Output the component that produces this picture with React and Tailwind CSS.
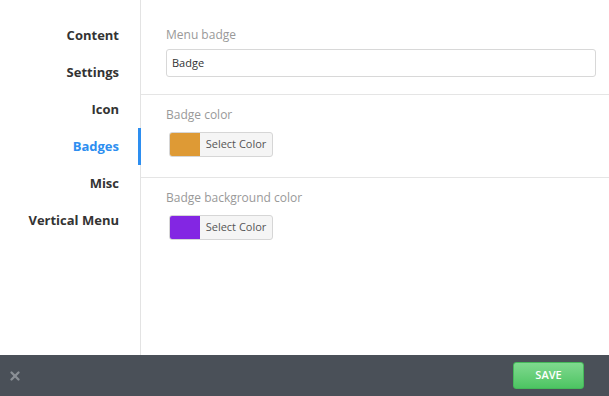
import { X } from 'lucide-react';

const navItems = ['Content', 'Settings', 'Icon', 'Badges', 'Misc', 'Vertical Menu'];

const ColorPicker = ({ color }) => (
    <div className="flex h-[25px] w-[104px] overflow-hidden rounded-[3px] border border-[#d6d6d6] bg-[#f5f5f5]">
        <div className={`h-full w-[30px] ${color}`} />
        <div className="flex flex-1 items-center justify-center text-[11px] text-[#555]">Select Color</div>
    </div>
);

const App = () => {
    return (
        <div className="flex h-[396px] w-[609px] flex-col bg-white font-['Open_Sans',sans-serif]">
            <div className="flex flex-1">
                {/* Sidebar */}
                <div className="w-[141px] shrink-0 border-r border-[#e3e3e3] pt-[17px]">
                    {navItems.map((item) => (
                        <div
                            key={item}
                            className={`relative flex h-[37px] items-center justify-end pr-[21px] text-[13px] font-bold ${item === 'Badges' ? 'text-[#2d8ef0]' : 'text-[#333]'}`}
                        >
                            {item}
                            {item === 'Badges' && <div className="absolute -right-px top-0 h-full w-[3px] bg-[#2d8ef0]" />}
                        </div>
                    ))}
                </div>

                {/* Content */}
                <div className="min-w-0 flex-1">
                    <div className="border-b border-[#e5e5e5] pb-[17px] pl-[25px] pr-[13px] pt-[26px]">
                        <div className="mb-[5px] text-[12px] text-[#999]">Menu badge</div>
                        <div className="flex h-[28px] items-center rounded-[3px] border border-[#d8d8d8] px-[5px] text-[11px] text-[#333]">
                            Badge
                        </div>
                    </div>
                    <div className="border-b border-[#e5e5e5] px-[28px] pb-[20px] pt-[11px]">
                        <div className="-ml-[3px] mb-[8px] text-[12px] text-[#999]">Badge color</div>
                        <ColorPicker color="bg-[#de9a35]" />
                    </div>
                    <div className="px-[28px] pt-[11px]">
                        <div className="-ml-[3px] mb-[8px] text-[12px] text-[#999]">Badge background color</div>
                        <ColorPicker color="bg-[#8326e3]" />
                    </div>
                </div>
            </div>

            {/* Footer */}
            <div className="flex h-[41px] items-center justify-between bg-[#4a5058] pl-[8px] pr-[25px]">
                <X className="h-[14px] w-[14px] text-[#8a8f95]" strokeWidth={4} />
                <button className="h-[27px] w-[71px] rounded-[3px] border border-[#45b85a] bg-gradient-to-b from-[#7fd98f] to-[#4cc462] text-[11px] font-semibold text-white">
                    SAVE
                </button>
            </div>
        </div>
    );
};

export default App;
